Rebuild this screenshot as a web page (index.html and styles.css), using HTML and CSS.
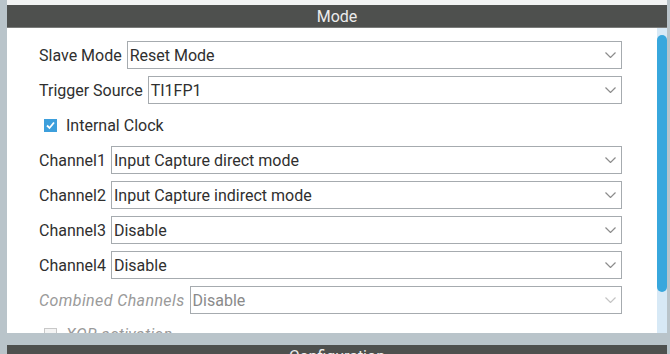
FILE: index.html
```html
<!DOCTYPE html>
<html lang="en">
<head>
  <meta charset="UTF-8">
  <title>Mode</title>
  <link rel="stylesheet" href="styles.css">
</head>
<body>
  <div class="app">
    <div class="topline"></div>
    <div class="section-head">Mode</div>
    <div class="section-body">
      <div class="form">
        <div class="row">
          <span class="label">Slave Mode</span>
          <div class="select"><span>Reset Mode</span><svg class="chev" width="11" height="6" viewBox="0 0 11 6"><polyline points="0.5,0.5 5.5,5.5 10.5,0.5"/></svg></div>
        </div>
        <div class="row">
          <span class="label">Trigger Source</span>
          <div class="select"><span>TI1FP1</span><svg class="chev" width="11" height="6" viewBox="0 0 11 6"><polyline points="0.5,0.5 5.5,5.5 10.5,0.5"/></svg></div>
        </div>
        <div class="row check-row">
          <span class="box checked"><svg width="13" height="13" viewBox="0 0 13 13"><polyline points="3,6.5 5.5,9 10,3.5"/></svg></span>
          <span class="label">Internal Clock</span>
        </div>
        <div class="row">
          <span class="label">Channel1</span>
          <div class="select"><span>Input Capture direct mode</span><svg class="chev" width="11" height="6" viewBox="0 0 11 6"><polyline points="0.5,0.5 5.5,5.5 10.5,0.5"/></svg></div>
        </div>
        <div class="row">
          <span class="label">Channel2</span>
          <div class="select"><span>Input Capture indirect mode</span><svg class="chev" width="11" height="6" viewBox="0 0 11 6"><polyline points="0.5,0.5 5.5,5.5 10.5,0.5"/></svg></div>
        </div>
        <div class="row">
          <span class="label">Channel3</span>
          <div class="select"><span>Disable</span><svg class="chev" width="11" height="6" viewBox="0 0 11 6"><polyline points="0.5,0.5 5.5,5.5 10.5,0.5"/></svg></div>
        </div>
        <div class="row">
          <span class="label">Channel4</span>
          <div class="select"><span>Disable</span><svg class="chev" width="11" height="6" viewBox="0 0 11 6"><polyline points="0.5,0.5 5.5,5.5 10.5,0.5"/></svg></div>
        </div>
        <div class="row disabled">
          <span class="label">Combined Channels</span>
          <div class="select"><span>Disable</span><svg class="chev" width="11" height="6" viewBox="0 0 11 6"><polyline points="0.5,0.5 5.5,5.5 10.5,0.5"/></svg></div>
        </div>
        <div class="row check-row disabled xor">
          <span class="box"></span>
          <span class="label">XOR activation</span>
        </div>
      </div>
      <div class="scroll"><div class="thumb"></div></div>
    </div>
    <div class="section-gap"></div>
    <div class="section-head">Configuration</div>
  </div>
</body>
</html>
```

FILE: styles.css
```css
body {
  margin: 0;
  height: 354px;
  overflow: hidden;
  background: #b9c4ca;
  font-family: Roboto, "Liberation Sans", sans-serif;
  font-size: 16px;
  color: #2f2f2f;
}
.app {
  margin: 0 3px 0 7px;
}
.topline {
  height: 5px;
  background: #f2f3f3;
}
.section-head {
  height: 21px;
  padding-top: 1px;
  line-height: 22px;
  background: #4e504e;
  border-bottom: 1px solid #7a7c7a;
  color: #ececec;
  text-align: center;
}
.section-body {
  display: flex;
  height: 305px;
  background: #fff;
}
.form {
  flex: 1;
  padding: 13px 35px 0 32px;
  display: flex;
  flex-direction: column;
  gap: 7px;
  overflow: hidden;
}
.row {
  display: flex;
  align-items: center;
  gap: 5px;
  height: 28px;
  flex-shrink: 0;
}
.label {
  white-space: nowrap;
}
.select {
  flex: 1;
  height: 28px;
  box-sizing: border-box;
  border: 1px solid #a6abaf;
  background: #fff;
  display: flex;
  align-items: center;
  justify-content: space-between;
  padding: 0 5px 0 2px;
}
.chev polyline {
  fill: none;
  stroke: #8c8c8c;
  stroke-width: 1.2;
}
.check-row {
  padding-left: 5px;
  gap: 9px;
}
.box {
  width: 13px;
  height: 13px;
  box-sizing: border-box;
  border: 1px solid #c8c8c8;
  background: #f4f4f4;
}
.box.checked {
  border: none;
  background: #3d9fdc;
}
.box svg {
  display: block;
}
.box polyline {
  fill: none;
  stroke: #fff;
  stroke-width: 1.8;
}
.disabled .label {
  font-style: italic;
  color: #9a9a9a;
  letter-spacing: 0.4px;
}
.disabled .select {
  color: #8a8a8a;
}
.disabled .chev polyline {
  stroke: #c4c4c4;
}
.xor {
  margin-top: -1px;
}
.scroll {
  width: 10px;
  background: #d7e9f6;
}
.thumb {
  margin-top: 7px;
  height: 257px;
  background: #38a7dd;
  border-radius: 5px;
}
.section-gap {
  height: 12px;
}
```
